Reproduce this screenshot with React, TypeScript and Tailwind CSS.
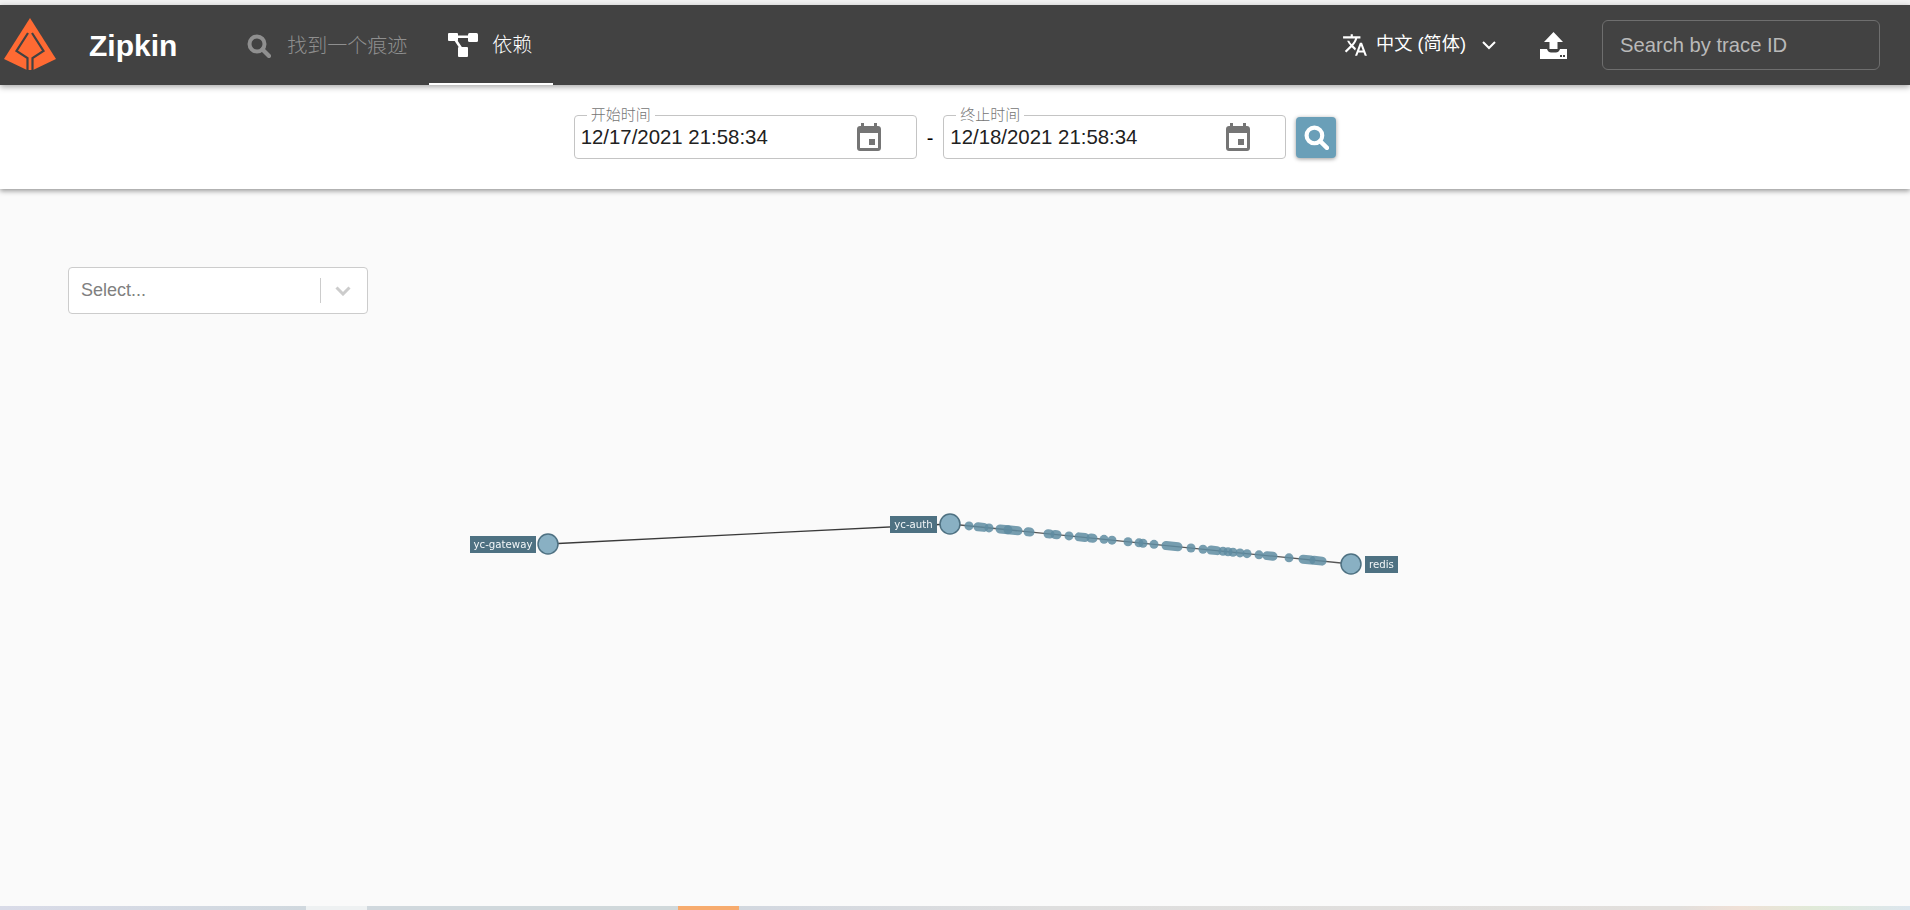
import { ReactNode } from 'react';

const UI_FONT = { fontFamily: '"Liberation Sans", "Noto Sans CJK SC", sans-serif' };

function Logo() {
  return (
    <svg width="54" height="54" viewBox="0 0 54 54" className="shrink-0">
      <path d="M27 0 L53 41 L30 52 H24 L1 41 Z" fill="#ff6a33" />
      <path d="M25 15 L13.5 33 L24.5 40 V53 M29 15 L40.5 33 L29.5 40 V53" fill="none" stroke="#424242" strokeWidth="2.2" />
    </svg>
  );
}

function SearchGlyph({ size, color }: { size: number; color: string }) {
  return (
    <svg width={size} height={size} viewBox="0 0 24 24" fill="none" className="shrink-0">
      <circle cx="10" cy="10" r="7.5" stroke={color} strokeWidth="4" />
      <path d="M15.5 15.5 L22 22" stroke={color} strokeWidth="4.2" strokeLinecap="round" />
    </svg>
  );
}

function TreeGlyph() {
  return (
    <svg width="30" height="24" viewBox="0 0 30 24" className="shrink-0" fill="#fff">
      <rect x="0" y="0" width="10" height="8" rx="1" />
      <rect x="20" y="0" width="10" height="9" rx="1.5" />
      <rect x="10" y="14" width="10" height="10" rx="1" />
      <path d="M8 2.5 H22 V5 H8 Z M6 7 L8.5 6 L14.5 15 L12 16 Z" />
    </svg>
  );
}

function TranslateGlyph() {
  return (
    <svg width="26" height="26" viewBox="0 0 24 24" fill="#fff" className="shrink-0">
      <path d="M12.87 15.07l-2.54-2.51.03-.03c1.74-1.94 2.98-4.17 3.71-6.53H17V4h-7V2H8v2H1v1.99h11.17C11.5 7.92 10.44 9.75 9 11.35 8.07 10.32 7.3 9.19 6.69 8h-2c.73 1.63 1.73 3.17 2.98 4.56l-5.09 5.02L4 19l5-5 3.11 3.11.76-2.04zM18.5 10h-2L12 22h2l1.12-3h4.75L21 22h2l-4.5-12zm-2.62 7l1.62-4.33L19.12 17h-3.24z" />
    </svg>
  );
}

function UploadGlyph() {
  return (
    <svg width="27" height="27" viewBox="0 0 27 27" className="shrink-0">
      <path d="M13.5 0 L23 10 L17.5 10 L17.5 17 L9.5 17 L9.5 10 L4 10 Z" fill="#fff" />
      <path d="M0 17 H7 C8 20 9.5 20.5 13.5 20.5 C17.5 20.5 19 20 20 17 H27 V27 H0 Z" fill="#fff" />
      <rect x="20" y="23" width="2" height="2" fill="#424242" />
      <rect x="23" y="23" width="2" height="2" fill="#424242" />
    </svg>
  );
}

function CalendarGlyph() {
  return (
    <svg width="24" height="28" viewBox="0 0 24 28" className="shrink-0">
      <path d="M4 0 H7 V3 H17 V0 H20 V3 H21 C22.7 3 24 4.3 24 6 V25 C24 26.7 22.7 28 21 28 H3 C1.3 28 0 26.7 0 25 V6 C0 4.3 1.3 3 3 3 H4 Z" fill="#757575" />
      <rect x="3" y="10" width="18" height="15" fill="#fff" />
      <rect x="12" y="16" width="6" height="6" fill="#757575" />
    </svg>
  );
}

function DateField({ label, value }: { label: string; value: string }) {
  return (
    <div className="relative flex h-[44px] w-[343px] items-center rounded border border-[#c4c4c4] pl-[6px] pr-[35px]">
      <span className="absolute left-[12px] top-[-9px] bg-white px-[4px] text-[15px] leading-[16px] font-light text-[#757575]">
        {label}
      </span>
      <span className="flex-1 text-[20.4px] text-[#212121]">{value}</span>
      <CalendarGlyph />
    </div>
  );
}

function NavTab({ icon, active, children }: { icon: ReactNode; active?: boolean; children: ReactNode }) {
  return (
    <div
      className={
        active
          ? 'flex h-full w-[124px] items-center justify-center gap-[14px] border-b-2 border-white pr-[2px] pt-[2px] text-white'
          : 'flex h-full w-[204px] items-center justify-center gap-[16px] pt-[2px] text-[#8f8f8f]'
      }
    >
      {icon}
      <span className="text-[20px] font-light">{children}</span>
    </div>
  );
}

// Particles drawn along the yc-auth -> redis link, [x, half length]
const PARTICLES: [number, number][] = [
  [969, 0], [981, 3], [989, 0], [1004, 4], [1013, 5], [1029, 1], [1049, 1], [1056, 1], [1069, 0],
  [1082, 3], [1092, 1], [1104, 0], [1112, 0], [1128, 0], [1139, 0], [1143, 0], [1154, 0], [1172, 6],
  [1191, 0], [1203, 0], [1214, 3], [1223, 0], [1228, 0], [1233, 0], [1240, 0], [1247, 0], [1259, 0],
  [1270, 3], [1289, 0], [1307, 4], [1318, 4],
];

function Label({ x, y, w, text }: { x: number; y: number; w: number; text: string }) {
  return (
    <g>
      <rect x={x} y={y} width={w} height={17} fill="#4e7182" />
      <text x={x + w / 2} y={y + 12} textAnchor="middle" fontSize="10.2" fill="#f2f6f8" fontFamily='"DejaVu Sans", sans-serif'>
        {text}
      </text>
    </g>
  );
}

function Node({ x, y }: { x: number; y: number }) {
  return <circle cx={x} cy={y} r={10} fill="#89b0c3" stroke="#4e7182" strokeWidth="1.5" />;
}

function DependencyGraph() {
  const yAt = (x: number) => 524 + (x - 950) * 0.0998;
  return (
    <svg width="1910" height="910" viewBox="0 0 1910 910" className="absolute left-0 top-0 blur-[0.4px]">
      <path d="M548 544 L950 524" stroke="#3a3a3a" strokeWidth="1.3" />
      <path d="M950 524 L1351 564" stroke="#555555" strokeWidth="1.3" />
      {PARTICLES.map(([x, half]) => (
        <line
          key={x}
          x1={x - half}
          y1={yAt(x - half)}
          x2={x + half + 0.01}
          y2={yAt(x + half)}
          stroke="#5f8ca1"
          strokeWidth="9"
          strokeLinecap="round"
          opacity="0.85"
        />
      ))}
      <Node x={548} y={544} />
      <Node x={950} y={524} />
      <Node x={1351} y={564} />
      <Label x={470} y={536} w={66} text="yc-gateway" />
      <Label x={890} y={516} w={47} text="yc-auth" />
      <Label x={1365} y={556} w={33} text="redis" />
    </svg>
  );
}

export default function App() {
  return (
    <div className="relative flex h-[910px] w-[1910px] flex-col overflow-hidden bg-[#fafafa]" style={UI_FONT}>
      <div className="h-[5px] bg-[#f1f1f1]" />

      {/* App bar */}
      <header className="z-20 flex h-[80px] items-center bg-[#424242] shadow-[0_2px_6px_rgba(0,0,0,0.35)]">
        <div className="ml-[3px] flex items-center">
          <Logo />
          <span className="ml-[32px] text-[30px] font-bold text-white">Zipkin</span>
        </div>
        <div className="ml-[48px] flex h-full">
          <NavTab icon={<SearchGlyph size={24} color="#8f8f8f" />}>找到一个痕迹</NavTab>
          <NavTab icon={<TreeGlyph />} active>
            依赖
          </NavTab>
        </div>
        <div className="ml-auto flex items-center">
          <TranslateGlyph />
          <span className="ml-[8px] text-[18.2px] text-white">中文 (简体)</span>
          <svg width="16" height="10" viewBox="0 0 16 10" fill="none" className="ml-[15px]">
            <path d="M2 2 L8 8 L14 2" stroke="#fff" strokeWidth="2" />
          </svg>
          <div className="ml-[43px]">
            <UploadGlyph />
          </div>
          <div className="ml-[35px] mr-[30px] flex h-[50px] w-[278px] items-center rounded-md border border-[#6e6e6e] px-[17px] text-[20.2px] text-[#b9b9b9]">
            Search by trace ID
          </div>
        </div>
      </header>

      {/* Date range bar */}
      <div className="z-10 flex h-[104px] items-start justify-center bg-white pt-[30px] shadow-[0_2px_5px_rgba(0,0,0,0.4)]">
        <DateField label="开始时间" value="12/17/2021 21:58:34" />
        <span className="mx-[10px] mt-[8px] text-[20px] text-black">-</span>
        <DateField label="终止时间" value="12/18/2021 21:58:34" />
        <button className="ml-[10px] mt-[2px] flex h-[41px] w-[40px] items-center justify-center rounded bg-[#6a9fb8] shadow-[0_1px_4px_rgba(0,0,0,0.4)]">
          <SearchGlyph size={25} color="#fff" />
        </button>
      </div>

      {/* Graph canvas */}
      <DependencyGraph />
      <div className="relative ml-[68px] mt-[78px] flex h-[47px] w-[300px] items-center rounded border border-[#cccccc] bg-white pl-[12px] pr-[16px]">
        <span className="flex-1 pb-[1px] text-[18px] text-[#808080]">Select...</span>
        <span className="h-[25px] w-px bg-[#cccccc]" />
        <svg width="16" height="10" viewBox="0 0 16 10" fill="none" className="ml-[14px]">
          <path d="M1.5 1.5 L8 8 L14.5 1.5" stroke="#cccccc" strokeWidth="3" />
        </svg>
      </div>

      {/* Taskbar sliver from the captured window */}
      <div className="absolute bottom-0 left-0 flex h-[4px] w-full bg-[linear-gradient(to_right,#d9dbe8_0%,#d0d8de_16%,#d0d8da_35%,#d3d8e0_40%,#dedede_55%,#e2dfdc_88%,#f0e0d6_91%,#e0ead8_95%,#dce6ee_100%)]">
        <div className="ml-[306px] h-full w-[61px] bg-[#eef1f2]" />
        <div className="ml-[311px] h-full w-[61px] bg-[#f7ab6e]" />
      </div>
    </div>
  );
}
